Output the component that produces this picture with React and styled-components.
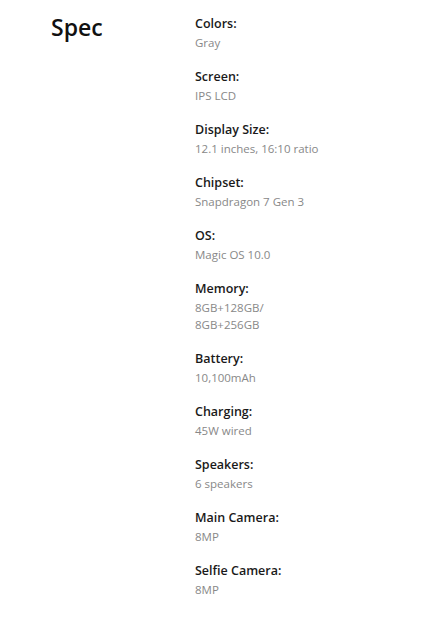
import React from 'react'
import styled, { createGlobalStyle } from 'styled-components'

const GlobalStyle = createGlobalStyle`
  body {
    margin: 0;
    background: #fff;
    font-family: "Open Sans", "Liberation Sans", sans-serif;
  }
`

const Page = styled.div`
  display: flex;
  align-items: flex-start;
  padding: 14px 0 0 51px;
  width: 436px;
  box-sizing: border-box;
`

const Title = styled.h2`
  width: 144px;
  margin: 0;
  font-size: 23px;
  line-height: 27px;
  font-weight: 600;
  color: #111;
`

const List = styled.dl`
  margin: 0;
  display: flex;
  flex-direction: column;
  gap: 16px;
`

const Item = styled.div`
  display: flex;
  flex-direction: column;
`

const Label = styled.dt`
  font-size: 12.5px;
  line-height: 20px;
  font-weight: 600;
  color: #1a1a1a;
`

const Value = styled.dd`
  margin: 0;
  font-size: 11.5px;
  line-height: 17px;
  color: #888;
`

const specs = [
  ['Colors:', ['Gray']],
  ['Screen:', ['IPS LCD']],
  ['Display Size:', ['12.1 inches, 16:10 ratio']],
  ['Chipset:', ['Snapdragon 7 Gen 3']],
  ['OS:', ['Magic OS 10.0']],
  ['Memory:', ['8GB+128GB/', '8GB+256GB']],
  ['Battery:', ['10,100mAh']],
  ['Charging:', ['45W wired']],
  ['Speakers:', ['6 speakers']],
  ['Main Camera:', ['8MP']],
  ['Selfie Camera:', ['8MP']],
]

export default function App() {
  return (
    <>
      <GlobalStyle />
      <Page>
        <Title>Spec</Title>
        <List>
          {specs.map(([label, lines]) => (
            <Item key={label}>
              <Label>{label}</Label>
              <Value>
                {lines.map((l, i) => (
                  <div key={i}>{l}</div>
                ))}
              </Value>
            </Item>
          ))}
        </List>
      </Page>
    </>
  )
}
